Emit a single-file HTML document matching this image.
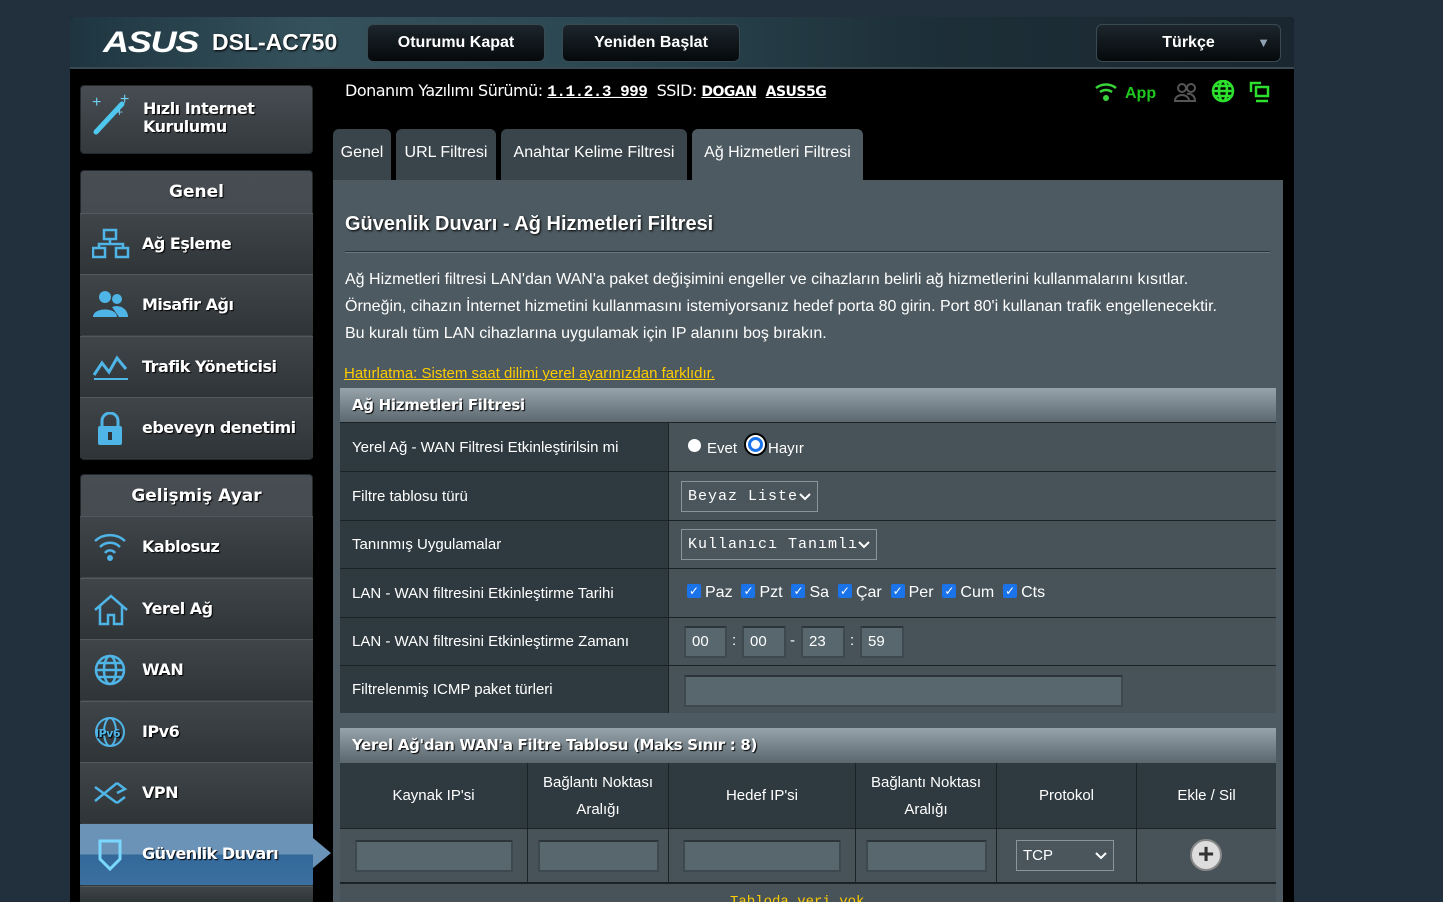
<!DOCTYPE html>
<html><head><meta charset="utf-8"><style>
*{box-sizing:border-box;margin:0;padding:0}
html,body{width:1443px;height:902px;overflow:hidden}
body{background:#21303c;font-family:"Liberation Sans",Arial,sans-serif;color:#fff;position:relative}
.a{position:absolute}
#frame{left:70px;top:17px;width:1224px;height:885px;background:#000;border-radius:4px 4px 0 0}
#hdr{left:70px;top:17px;width:1224px;height:52px;background:linear-gradient(90deg,#1e3540,#35525c 20%,#2a4650 45%,#1d2f38 70%,#1a2630);border-radius:4px 4px 0 0;border-bottom:2px solid #3a4a52}
.btn{top:24px;height:38px;background:linear-gradient(#1c262c,#05090b);border:1px solid #3a4a52;border-radius:6px;font-weight:bold;font-size:16px;text-align:center;line-height:36px}
.side{left:80px;width:233px;background:linear-gradient(#474d52,#34393d);border:1px solid #23282b;border-radius:4px}
.si{left:80px;width:233px;height:61px;background:linear-gradient(#3f4549,#2f3437);border-top:1px solid #52585c;font-weight:bold;font-size:16px;font-family:"DejaVu Sans",sans-serif;letter-spacing:-.5px;line-height:60px;padding-left:62px;text-shadow:1px 1px 1px #000}
.si svg{position:absolute;left:12px;top:14px}
.sh{font-weight:bold;font-size:17px;font-family:"DejaVu Sans",sans-serif;text-align:center;text-shadow:1px 1px 1px #000}
.tab{top:129px;height:51px;background:#3a454b;border-radius:6px 6px 0 0;font-size:16px;line-height:48px;text-align:center;color:#fff}
#panel{left:333px;top:180px;width:950px;height:722px;background:#4d5a61}
.row{left:340px;width:936px;background:#2f3a40;border-top:1px solid #1c2327;font-size:15px}
.lab{position:absolute;left:12px;top:0;height:100%;display:flex;align-items:center}
.val{position:absolute;left:328px;top:0;height:100%;width:608px;background:#475359;border-left:1px solid #1c2327;font-size:15px}
.th{left:340px;width:936px;height:35px;background:linear-gradient(#97a3aa,#5b676e);font-weight:bold;font-size:15px;line-height:35px;padding-left:12px;text-shadow:1px 1px 1px #000;font-family:"DejaVu Sans",sans-serif;letter-spacing:-.3px}
.sel{position:absolute;border:1px solid #8a959b;background:#4a565c;font-family:"Liberation Mono",monospace;font-size:15px;padding-left:6px;line-height:29px;height:31px;letter-spacing:1px}
.sel svg{position:absolute;right:6px;top:11px}
.inp{position:absolute;background:#58676e;border:2px solid #3e494f;border-top-color:#2c3539;font-size:15px;padding-left:6px;line-height:28px;height:32px}
.cb{display:inline-block;width:14px;height:14px;background:#1a73e8;border-radius:2px;color:#fff;font-size:12px;line-height:14px;text-align:center;vertical-align:2px;margin-right:4px}
.col{position:absolute;top:0;height:100%;border-left:1px solid #1c2327;display:flex;align-items:center;justify-content:center;text-align:center;line-height:27px;font-size:15px}
</style></head><body>
<div class="a" id="frame"></div>
<div class="a" id="hdr"></div>
<div class="a" style="left:103px;top:26px;font:italic bold 30px 'Liberation Sans';letter-spacing:-1px;transform:scaleX(1.2);transform-origin:left">ASUS</div>
<div class="a" style="left:212px;top:29px;font-weight:bold;font-size:23px;text-shadow:1px 1px 2px #000">DSL-AC750</div>
<div class="a btn" style="left:367px;width:178px">Oturumu Kapat</div>
<div class="a btn" style="left:562px;width:178px">Yeniden Başlat</div>
<div class="a btn" style="left:1096px;width:185px">Türkçe<span style="position:absolute;right:10px;top:0;color:#8fa3b5;font-size:13px">▼</span></div>

<div class="a side" style="top:85px;height:69px"></div>
<svg class="a" style="left:92px;top:92px" width="44" height="44"><line x1="4" y1="40" x2="30" y2="12" stroke="#4fc8f0" stroke-width="5" stroke-linecap="round"/><text x="0" y="15" fill="#6fd0f0" font-size="16">+</text><text x="28" y="12" fill="#6fd0f0" font-size="16">+</text><text x="24" y="24" fill="#6fd0f0" font-size="12">+</text></svg>
<div class="a" style="left:143px;top:100px;font:bold 16px 'DejaVu Sans';line-height:18px;letter-spacing:-.5px;text-shadow:1px 1px 1px #000">Hızlı Internet<br>Kurulumu</div>

<div class="a side" style="top:170px;height:290px"></div>
<div class="a sh" style="left:80px;width:233px;top:182px">Genel</div>
<div class="a si" style="top:213px"><svg width="38" height="32"><g fill="none" stroke="#4fb4e6" stroke-width="2.5"><rect x="12" y="2" width="12" height="9"/><rect x="1" y="20" width="12" height="9"/><rect x="24" y="20" width="12" height="9"/><path d="M18 11v5M7 20v-4h24v4"/></g></svg>Ağ Eşleme</div>
<div class="a si" style="top:274px"><svg width="38" height="32"><g fill="#4fb4e6"><circle cx="13" cy="8" r="6"/><circle cx="25" cy="10" r="5"/><path d="M1 28c0-10 24-10 24 0z"/><path d="M20 18c8-3 16 2 16 10h-9z"/></g></svg>Misafir Ağı</div>
<div class="a si" style="top:336px"><svg width="38" height="32"><path d="M2 24l8-12 7 9 8-14 9 11" fill="none" stroke="#4fb4e6" stroke-width="3"/><path d="M2 28h34" stroke="#4fb4e6" stroke-width="2"/></svg>Trafik Yöneticisi</div>
<div class="a si" style="top:397px"><svg width="38" height="34"><path d="M10 14v-5a8 8 0 0 1 16 0v5" fill="none" stroke="#4fb4e6" stroke-width="3"/><rect x="6" y="14" width="24" height="19" rx="2" fill="#4fb4e6"/><rect x="16" y="20" width="4" height="8" fill="#2f3437"/></svg>ebeveyn denetimi</div>

<div class="a side" style="top:474px;height:428px"></div>
<div class="a sh" style="left:80px;width:233px;top:486px">Gelişmiş Ayar</div>
<div class="a si" style="top:516px"><svg width="38" height="32"><g fill="none" stroke="#4fb4e6" stroke-width="2.5"><path d="M3 10a22 22 0 0 1 30 0M8 16a14 14 0 0 1 20 0M13 22a6 6 0 0 1 10 0"/></g><circle cx="18" cy="27" r="3" fill="#4fb4e6"/></svg>Kablosuz</div>
<div class="a si" style="top:578px"><svg width="38" height="34"><path d="M3 17L19 3l16 14M8 13v18h8v-9h6v9h8V13" fill="none" stroke="#4fb4e6" stroke-width="2.5"/></svg>Yerel Ağ</div>
<div class="a si" style="top:639px"><svg width="38" height="32"><g fill="none" stroke="#4fb4e6" stroke-width="2.5"><circle cx="18" cy="16" r="14"/><ellipse cx="18" cy="16" rx="6" ry="14"/><path d="M4 16h28M6 9h24M6 23h24"/></g></svg>WAN</div>
<div class="a si" style="top:701px"><svg width="38" height="32"><g fill="none" stroke="#4fb4e6" stroke-width="2"><circle cx="18" cy="16" r="14"/><ellipse cx="18" cy="16" rx="6" ry="14"/></g><text x="3" y="21" fill="#4fb4e6" font-size="11" font-weight="bold">IPv6</text></svg>IPv6</div>
<div class="a si" style="top:762px"><svg width="38" height="32"><path d="M3 10l22 16M3 24l22-18M25 6l8 6-8 4M25 26l8-6" fill="none" stroke="#4fb4e6" stroke-width="2.5"/></svg>VPN</div>
<div class="a si" style="top:824px;background:linear-gradient(#6b93b8 50%,#33689a 50%,#3a6f9f);border:none"><svg width="38" height="34"><path d="M8 3h20v18l-10 10-10-10z" fill="none" stroke="#7ad8ff" stroke-width="3"/></svg>Güvenlik Duvarı</div>
<div class="a" style="left:313px;top:838px;border-left:18px solid #6b93b8;border-top:15px solid transparent;border-bottom:15px solid transparent"></div>
<div class="a si" style="top:886px;height:16px"></div>

<div class="a" style="left:345px;top:81px;font-size:16px;font-family:'DejaVu Sans';letter-spacing:-.5px">Donanım Yazılımı Sürümü: <b style="text-decoration:underline;font-family:'Liberation Mono';font-size:16px">1.1.2.3_999</b> &nbsp;SSID: <b style="text-decoration:underline;font-size:14px">DOGAN</b> &nbsp;<b style="text-decoration:underline;font-size:14px">ASUS5G</b></div>
<svg class="a" style="left:1094px;top:80px" width="180" height="26"><g fill="none" stroke="#3ad43a" stroke-width="2.5"><path d="M2 8a16 16 0 0 1 20 0M6 12a10 10 0 0 1 12 0"/></g><circle cx="12" cy="18" r="3" fill="#3ad43a"/><text x="31" y="18" fill="#1fc81f" font-size="16" font-weight="bold" font-family="Liberation Sans">App</text><g fill="none" stroke="#555" stroke-width="2"><circle cx="88" cy="8" r="4"/><circle cx="97" cy="8" r="4"/><path d="M81 21c0-8 14-8 14 0zM92 21h9c0-6-5-8-8-7"/></g><g fill="none" stroke="#2de02d" stroke-width="2.5"><circle cx="129" cy="11" r="10"/><ellipse cx="129" cy="11" rx="4" ry="10"/><path d="M119 11h20M121 6h16M121 16h16"/></g><g fill="none" stroke="#2de02d" stroke-width="2.5"><path d="M157 12V3h10"/><rect x="162" y="7" width="12" height="9"/><path d="M162 21h12"/></g></svg>

<div class="a tab" style="left:333px;width:58px">Genel</div>
<div class="a tab" style="left:396px;width:100px">URL Filtresi</div>
<div class="a tab" style="left:501px;width:186px">Anahtar Kelime Filtresi</div>
<div class="a tab" style="left:692px;width:171px;background:#4d5a61">Ağ Hizmetleri Filtresi</div>

<div class="a" id="panel"></div>
<div class="a" style="left:345px;top:213px;font-weight:bold;font-size:20px;text-shadow:1px 1px 2px #000">Güvenlik Duvarı - Ağ Hizmetleri Filtresi</div>
<div class="a" style="left:345px;top:251px;width:925px;height:2px;background:#2b3438;border-bottom:1px solid #6b7880"></div>
<div class="a" style="left:345px;top:266px;font-size:16px;line-height:27px;letter-spacing:0">Ağ Hizmetleri filtresi LAN'dan WAN'a paket değişimini engeller ve cihazların belirli ağ hizmetlerini kullanmalarını kısıtlar.<br>Örneğin, cihazın İnternet hizmetini kullanmasını istemiyorsanız hedef porta 80 girin. Port 80'i kullanan trafik engellenecektir.<br>Bu kuralı tüm LAN cihazlarına uygulamak için IP alanını boş bırakın.</div>
<div class="a" style="left:344px;top:365px;font-size:15px;color:#ffcc00;text-decoration:underline">Hatırlatma: Sistem saat dilimi yerel ayarınızdan farklıdır.</div>

<div class="a th" style="top:388px">Ağ Hizmetleri Filtresi</div>
<div class="a row" style="top:422px;height:49px"><div class="lab">Yerel Ağ - WAN Filtresi Etkinleştirilsin mi</div><div class="val"><span class="a" style="left:19px;top:16px;width:13px;height:13px;border-radius:50%;background:#fff"></span><span class="a" style="left:38px;top:17px">Evet</span><span class="a" style="left:75px;top:10px;width:23px;height:23px;border-radius:50%;border:2px solid #000;background:#fff"><span class="a" style="left:2px;top:2px;width:15px;height:15px;border-radius:50%;border:3px solid #1a73e8;background:#fff"></span></span><span class="a" style="left:99px;top:17px">Hayır</span></div></div>
<div class="a row" style="top:471px;height:49px"><div class="lab">Filtre tablosu türü</div><div class="val"><div class="sel" style="left:12px;top:9px;width:137px">Beyaz Liste<svg width="12" height="8"><path d="M1 1l5 5 5-5" fill="none" stroke="#fff" stroke-width="2"/></svg></div></div></div>
<div class="a row" style="top:520px;height:48px"><div class="lab">Tanınmış Uygulamalar</div><div class="val"><div class="sel" style="left:12px;top:8px;width:196px">Kullanıcı Tanımlı<svg width="12" height="8"><path d="M1 1l5 5 5-5" fill="none" stroke="#fff" stroke-width="2"/></svg></div></div></div>
<div class="a row" style="top:568px;height:49px"><div class="lab">LAN - WAN filtresini Etkinleştirme Tarihi</div><div class="val" style="padding:15px 0 0 18px;font-size:16px"><span class="cb">✓</span>Paz &nbsp;<span class="cb">✓</span>Pzt &nbsp;<span class="cb">✓</span>Sa &nbsp;<span class="cb">✓</span>Çar &nbsp;<span class="cb">✓</span>Per &nbsp;<span class="cb">✓</span>Cum &nbsp;<span class="cb">✓</span>Cts</div></div>
<div class="a row" style="top:617px;height:48px"><div class="lab">LAN - WAN filtresini Etkinleştirme Zamanı</div><div class="val"><div class="inp" style="left:15px;top:8px;width:43px">00</div><span class="a" style="left:63px;top:14px">:</span><div class="inp" style="left:73px;top:8px;width:44px">00</div><span class="a" style="left:121px;top:14px">-</span><div class="inp" style="left:132px;top:8px;width:44px">23</div><span class="a" style="left:181px;top:14px">:</span><div class="inp" style="left:191px;top:8px;width:44px">59</div></div></div>
<div class="a row" style="top:665px;height:48px"><div class="lab">Filtrelenmiş ICMP paket türleri</div><div class="val"><div class="inp" style="left:15px;top:9px;width:439px"></div></div></div>

<div class="a th" style="top:728px">Yerel Ağ'dan WAN'a Filtre Tablosu (Maks Sınır : 8)</div>
<div class="a row" style="top:763px;height:65px;border-top:none">
<div class="col" style="left:0;width:187px;border:none">Kaynak IP'si</div>
<div class="col" style="left:187px;width:141px">Bağlantı Noktası<br>Aralığı</div>
<div class="col" style="left:328px;width:187px">Hedef IP'si</div>
<div class="col" style="left:515px;width:141px">Bağlantı Noktası<br>Aralığı</div>
<div class="col" style="left:656px;width:140px">Protokol</div>
<div class="col" style="left:796px;width:140px">Ekle / Sil</div>
</div>
<div class="a row" style="top:828px;height:54px;background:#475359">
<div class="inp" style="left:15px;top:11px;width:158px"></div>
<div class="col" style="left:187px;width:141px"></div><div class="inp" style="left:198px;top:11px;width:121px"></div>
<div class="col" style="left:328px;width:187px"></div><div class="inp" style="left:343px;top:11px;width:158px"></div>
<div class="col" style="left:515px;width:141px"></div><div class="inp" style="left:526px;top:11px;width:121px"></div>
<div class="col" style="left:656px;width:140px"></div><div class="sel" style="left:676px;top:11px;width:98px;font-family:'Liberation Sans';letter-spacing:0">TCP<svg width="12" height="8"><path d="M1 1l5 5 5-5" fill="none" stroke="#fff" stroke-width="2"/></svg></div>
<div class="col" style="left:796px;width:140px"></div><span class="a" style="left:850px;top:10px;width:32px;height:32px;border-radius:50%;background:#ddd;border:2px solid #888;color:#333;font-size:28px;font-weight:bold;line-height:26px;text-align:center">+</span>
</div>
<div class="a row" style="top:882px;height:20px;background:#475359;border-top:2px solid #1c2327;overflow:hidden"><span class="a" style="left:390px;top:10px;color:#ffcc00;font-family:'Liberation Mono';font-size:14px">Tabloda veri yok</span></div>
</body></html>
